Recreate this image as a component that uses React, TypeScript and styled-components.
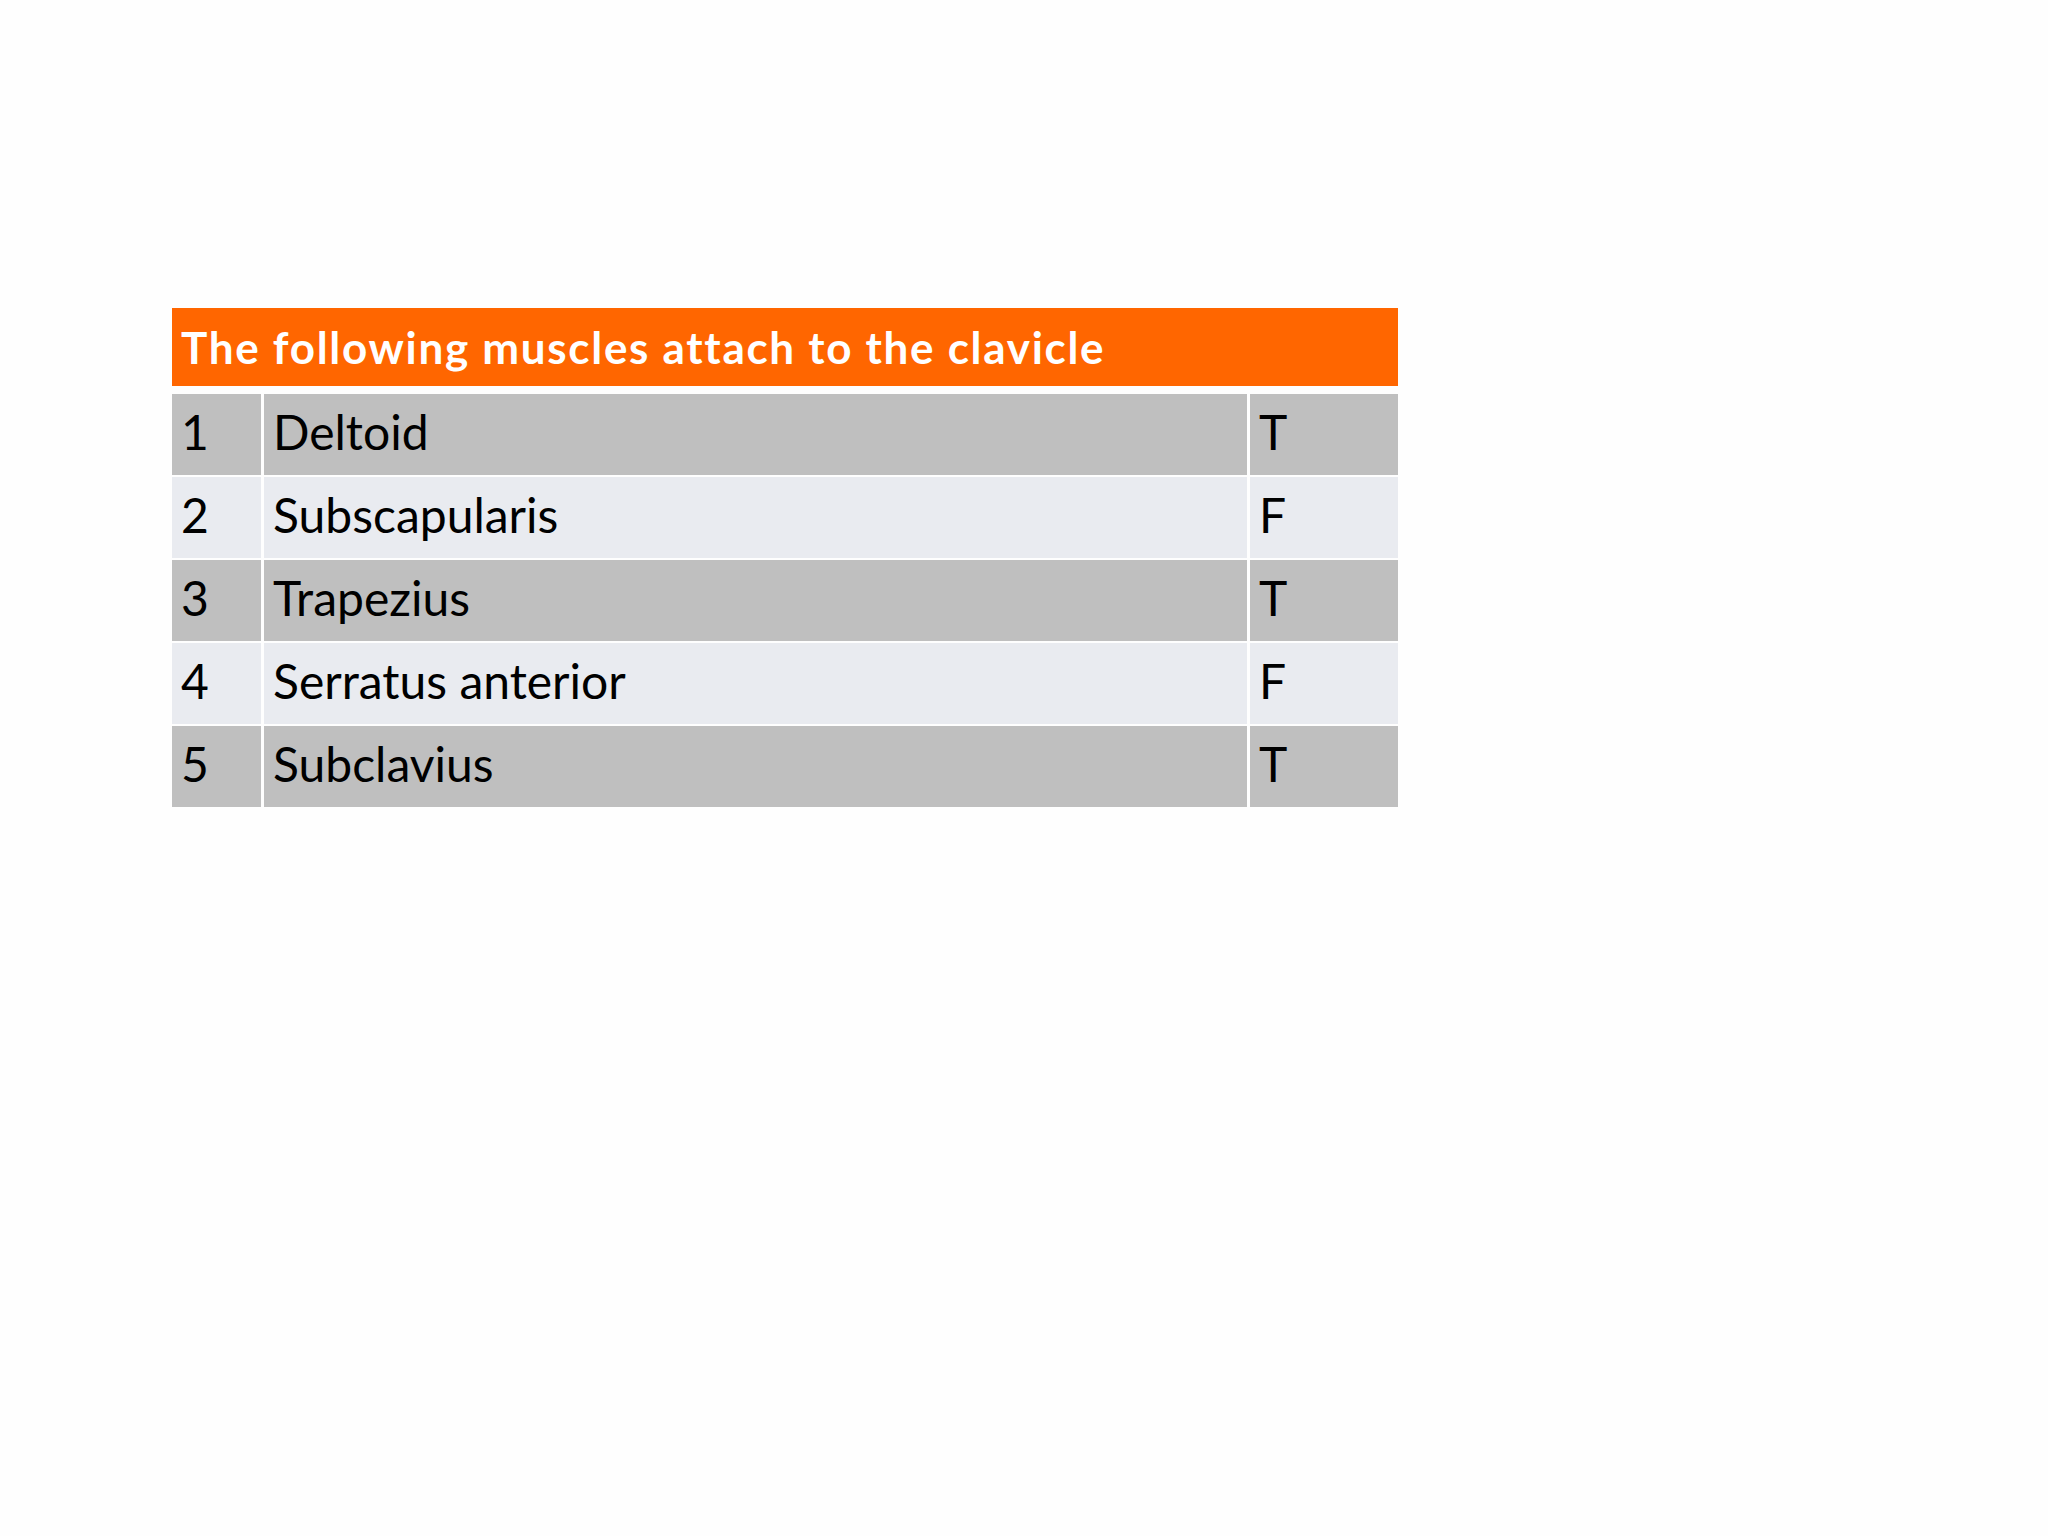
import React from "react";
import styled, { createGlobalStyle } from "styled-components";

const rows = [
  { n: "1", name: "Deltoid", answer: "T" },
  { n: "2", name: "Subscapularis", answer: "F" },
  { n: "3", name: "Trapezius", answer: "T" },
  { n: "4", name: "Serratus anterior", answer: "F" },
  { n: "5", name: "Subclavius", answer: "T" },
];

const GlobalStyle = createGlobalStyle`
  body {
    margin: 0;
    background: #fefefe;
    font-family: Lato, "Open Sans", sans-serif;
  }
`;

const Page = styled.div`
  width: 2048px;
  height: 1536px;
  padding: 308px 0 0 172px;
  box-sizing: border-box;
`;

const Table = styled.div`
  display: grid;
  grid-template-columns: 89px 983px 148px;
  grid-template-rows: auto;
  grid-auto-rows: 80.5px;
  column-gap: 3px;
  row-gap: 2.5px;
  width: 1226px;
`;

const Header = styled.div`
  grid-column: 1 / -1;
  height: 78px;
  margin-bottom: 5.5px;
  background: #ff6600;
  color: #ffffff;
  font-weight: 700;
  font-size: 44px;
  letter-spacing: 1.7px;
  display: flex;
  align-items: center;
  padding-left: 9px;
`;

const Cell = styled.div<{ $dark: boolean }>`
  background: ${(p) => (p.$dark ? "#bfbfbf" : "#e9ebf0")};
  color: #000000;
  font-size: 48px;
  display: flex;
  align-items: center;
  padding-left: 9px;
  padding-bottom: 5px;
`;

export default function App() {
  return (
    <>
      <GlobalStyle />
      <Page>
        <Table>
          <Header>The following muscles attach to the clavicle</Header>
          {rows.map((r, i) => (
            <React.Fragment key={r.n}>
              <Cell $dark={i % 2 === 0}>{r.n}</Cell>
              <Cell $dark={i % 2 === 0}>{r.name}</Cell>
              <Cell $dark={i % 2 === 0}>{r.answer}</Cell>
            </React.Fragment>
          ))}
        </Table>
      </Page>
    </>
  );
}
